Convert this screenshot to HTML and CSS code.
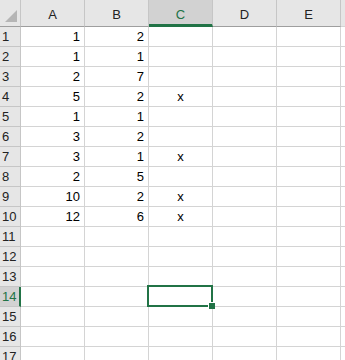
FILE: index.html
```html
<!DOCTYPE html>
<html lang="en">

<head>
    <meta charset="UTF-8">
    <meta name="viewport" content="width=device-width, initial-scale=1.0">
    <title>Sheet1</title>
    <link rel="stylesheet" href="styles.css">
</head>

<body>
    <div class="sheet">
        <!-- column headers -->
        <div class="corner"><span class="tri"></span></div>
        <div class="colhead">A</div>
        <div class="colhead">B</div>
        <div class="colhead active">C</div>
        <div class="colhead">D</div>
        <div class="colhead">E</div>
        <div class="colhead rest"></div>

        <!-- rows -->
        <div class="rowhead">1</div><div class="cell num">1</div><div class="cell num">2</div><div class="cell"></div><div class="cell"></div><div class="cell"></div><div class="rest"></div>
        <div class="rowhead">2</div><div class="cell num">1</div><div class="cell num">1</div><div class="cell"></div><div class="cell"></div><div class="cell"></div><div class="rest"></div>
        <div class="rowhead">3</div><div class="cell num">2</div><div class="cell num">7</div><div class="cell"></div><div class="cell"></div><div class="cell"></div><div class="rest"></div>
        <div class="rowhead">4</div><div class="cell num">5</div><div class="cell num">2</div><div class="cell mid">x</div><div class="cell"></div><div class="cell"></div><div class="rest"></div>
        <div class="rowhead">5</div><div class="cell num">1</div><div class="cell num">1</div><div class="cell"></div><div class="cell"></div><div class="cell"></div><div class="rest"></div>
        <div class="rowhead">6</div><div class="cell num">3</div><div class="cell num">2</div><div class="cell"></div><div class="cell"></div><div class="cell"></div><div class="rest"></div>
        <div class="rowhead">7</div><div class="cell num">3</div><div class="cell num">1</div><div class="cell mid">x</div><div class="cell"></div><div class="cell"></div><div class="rest"></div>
        <div class="rowhead">8</div><div class="cell num">2</div><div class="cell num">5</div><div class="cell"></div><div class="cell"></div><div class="cell"></div><div class="rest"></div>
        <div class="rowhead">9</div><div class="cell num">10</div><div class="cell num">2</div><div class="cell mid">x</div><div class="cell"></div><div class="cell"></div><div class="rest"></div>
        <div class="rowhead">10</div><div class="cell num">12</div><div class="cell num">6</div><div class="cell mid">x</div><div class="cell"></div><div class="cell"></div><div class="rest"></div>
        <div class="rowhead">11</div><div class="cell"></div><div class="cell"></div><div class="cell"></div><div class="cell"></div><div class="cell"></div><div class="rest"></div>
        <div class="rowhead">12</div><div class="cell"></div><div class="cell"></div><div class="cell"></div><div class="cell"></div><div class="cell"></div><div class="rest"></div>
        <div class="rowhead">13</div><div class="cell"></div><div class="cell"></div><div class="cell"></div><div class="cell"></div><div class="cell"></div><div class="rest"></div>
        <div class="rowhead active">14</div><div class="cell"></div><div class="cell"></div><div class="cell selected"></div><div class="cell"></div><div class="cell"></div><div class="rest"></div>
        <div class="rowhead">15</div><div class="cell"></div><div class="cell"></div><div class="cell"></div><div class="cell"></div><div class="cell"></div><div class="rest"></div>
        <div class="rowhead">16</div><div class="cell"></div><div class="cell"></div><div class="cell"></div><div class="cell"></div><div class="cell"></div><div class="rest"></div>
        <div class="rowhead">17</div><div class="cell"></div><div class="cell"></div><div class="cell"></div><div class="cell"></div><div class="cell"></div><div class="rest"></div>
    </div>
</body>

</html>
```
FILE: styles.css
```css
/* page */
body {
    margin: 0;
    background-color: #ffffff;
    font-family: "Liberation Sans", Arial, sans-serif;
    font-size: 13px;
    color: #000000;
    overflow: hidden;
}

/* grid of the sheet */
.sheet {
    display: grid;
    grid-template-columns: 21px repeat(5, 64px) 1fr;
    grid-template-rows: 27px repeat(17, 20px);
    width: 345px;
}

.sheet > div {
    box-sizing: border-box;
}

/* headers */
.corner {
    position: relative;
    background-color: #e6e6e6;
    border-right: 1px solid #c6c6c6;
    border-bottom: 1px solid #9e9e9e;
}

.corner .tri {
    position: absolute;
    right: 3px;
    bottom: 4px;
    width: 0;
    height: 0;
    border-left: 12px solid transparent;
    border-bottom: 12px solid #b5b5b5;
}

.colhead {
    background-color: #e6e6e6;
    border-right: 1px solid #c6c6c6;
    border-bottom: 1px solid #9e9e9e;
    display: flex;
    align-items: center;
    justify-content: center;
    padding-top: 2px;
    color: #222222;
}

.colhead.rest {
    border-right: none;
}

.colhead.active {
    background-color: #d2d2d2;
    color: #217346;
    border-bottom: 3px solid #217346;
    padding-top: 4px;
}

.rowhead {
    background-color: #e6e6e6;
    border-right: 1px solid #c6c6c6;
    border-bottom: 1px solid #c6c6c6;
    display: flex;
    align-items: center;
    padding-left: 2px;
    color: #222222;
}

.rowhead.active {
    background-color: #d2d2d2;
    color: #217346;
    border-right: 2px solid #217346;
}

/* cells */
.cell {
    border-right: 1px solid #d4d4d4;
    border-bottom: 1px solid #d4d4d4;
    display: flex;
    align-items: center;
    padding: 0 4px;
}

.num {
    justify-content: flex-end;
}

.mid {
    justify-content: center;
}

.rest {
    border-bottom: 1px solid #d4d4d4;
}

/* active cell */
.selected {
    position: relative;
}

.selected::after {
    content: "";
    position: absolute;
    left: -2px;
    top: -2px;
    right: -1px;
    bottom: -1px;
    border: 2px solid #217346;
}

.selected::before {
    content: "";
    position: absolute;
    right: -3px;
    bottom: -3px;
    width: 6px;
    height: 6px;
    background-color: #217346;
    border-left: 1px solid #ffffff;
    border-top: 1px solid #ffffff;
    z-index: 1;
}
```
